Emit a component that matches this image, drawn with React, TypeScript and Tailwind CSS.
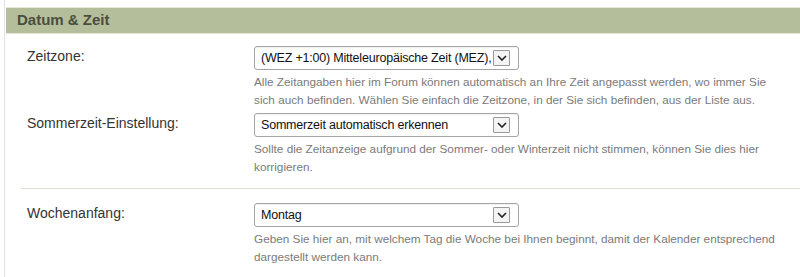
import React from "react";

function Chevron() {
  return (
    <span className="flex h-[16px] w-[17px] items-center justify-center border border-[#9a9a9a] bg-[#f4f4f4] rounded-[1px]">
      <svg width="10" height="6" viewBox="0 0 10 6">
        <path d="M1 1 L5 5 L9 1" fill="none" stroke="#222" strokeWidth="1.6" />
      </svg>
    </span>
  );
}

function Select({ text }: { text: string }) {
  return (
    <div className="flex h-[24px] w-[265px] items-center justify-between rounded-[3px] border border-[#a5a5a5] bg-white pl-[6px] pr-[8px] shadow-[inset_0_1px_1px_rgba(0,0,0,0.06)]">
      <span className="min-w-0 overflow-hidden whitespace-nowrap text-[12.5px] tracking-[-0.2px] text-[#111]">{text}</span>
      <div className="ml-[2px] flex shrink-0">
        <Chevron />
      </div>
    </div>
  );
}

function Row({ label, select, help }: { label: string; select: string; help: React.ReactNode }) {
  return (
    <div className="flex">
      <div className="w-[249px] shrink-0 pl-[22px] text-[14px] text-[#333]">{label}</div>
      <div className="flex flex-col">
        <Select text={select} />
        <div className="mt-[3px] text-[11.75px] leading-[18px] text-[#7a7a7a]">{help}</div>
      </div>
    </div>
  );
}

export default function App() {
  return (
    <div className="h-[277px] w-[800px] overflow-hidden bg-white" style={{ fontFamily: '"Liberation Sans", Arial, sans-serif' }}>
      <div className="ml-[4px] h-full border-l border-[#e2e2e2] pt-[7px]">
        <div className="ml-[1px] flex h-[27px] items-center border-y border-[#e4e8d6] bg-[#b5be9b] pl-[11px] text-[15px] font-bold text-[#4b4e3c]">
          Datum &amp; Zeit
        </div>
        <div className="pt-[12px]">
          <Row
            label="Zeitzone:"
            select="(WEZ +1:00) Mitteleuropäische Zeit (MEZ), Deutschland"
            help={
              <>
                Alle Zeitangaben hier im Forum können automatisch an Ihre Zeit angepasst werden, wo immer Sie
                <br />
                sich auch befinden. Wählen Sie einfach die Zeitzone, in der Sie sich befinden, aus der Liste aus.
              </>
            }
          />
          <div className="h-[4px]" />
          <Row
            label="Sommerzeit-Einstellung:"
            select="Sommerzeit automatisch erkennen"
            help={
              <>
                Sollte die Zeitanzeige aufgrund der Sommer- oder Winterzeit nicht stimmen, können Sie dies hier
                <br />
                korrigieren.
              </>
            }
          />
          <div className="ml-[16px] mt-[12px] mb-[14px] border-t border-[#dedfd0]" />
          <Row
            label="Wochenanfang:"
            select="Montag"
            help={
              <>
                Geben Sie hier an, mit welchem Tag die Woche bei Ihnen beginnt, damit der Kalender entsprechend
                <br />
                dargestellt werden kann.
              </>
            }
          />
        </div>
      </div>
    </div>
  );
}
